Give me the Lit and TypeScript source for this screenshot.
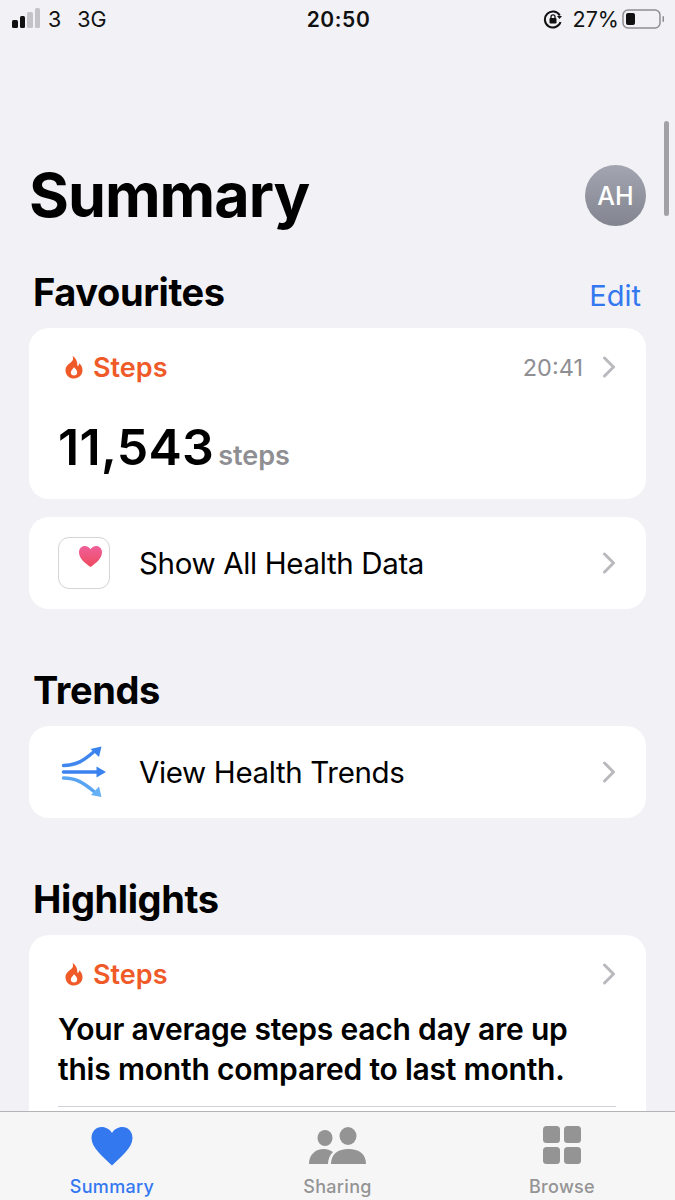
import { LitElement, html, css, svg } from "lit";
import { customElement } from "lit/decorators.js";

const flame = svg`<svg class="flame" viewBox="0 0 20 24" width="20" height="24"><path fill="#ef5a28" fill-rule="evenodd" d="M8.500 1c1.200 2.500.6 4.200-1.200 6C5 8.800 1.500 11.200 1.500 15.200 1.500 19.900 5.200 23.500 10 23.500s8.500-3.500 8.500-8.200c0-3.300-1.600-5.600-3.200-7-.2 1.500-.8 2.500-1.900 3C13.700 7 12 3 8.500 1zM10 12.300c1.800 1.900 3.200 3.300 3.200 5.200 0 1.900-1.400 3-3.200 3s-3.200-1.100-3.200-3c0-1.900 1.800-3 3.200-5.200z"/></svg>`;
const chevron = svg`<svg class="chev" viewBox="0 0 14 22" width="14" height="22"><path d="M2.500 2l9 9-9 9" fill="none" stroke="#b9b9be" stroke-width="3" stroke-linecap="round" stroke-linejoin="round"/></svg>`;

@customElement("app-root")
export class AppRoot extends LitElement {
  static styles = css`
    :host { display: block; position: relative; width: 675px; height: 1200px; overflow: hidden; background: #f1f1f6; font-family: Inter, "Liberation Sans", sans-serif; color: #000; }
    .status { height: 38px; display: grid; grid-template-columns: 1fr auto 1fr; align-items: center; padding: 0 10px 0 12px; font-size: 21.500px; color: #111; }
    .left { display: flex; align-items: center; gap: 8px; }
    .left .net { margin-left: 8px; }
    .bars { display: flex; align-items: flex-end; gap: 2px; height: 20px; margin-top: -2px; }
    .bars i { display: block; width: 5.500px; border-radius: 1.500px; background: #111; }
    .bars i.off { background: #c4c4c8; }
    .time { font-weight: 600; font-size: 21px; letter-spacing: .6px; }
    .right { display: flex; justify-content: flex-end; align-items: center; gap: 10px; }
    .right .pct { margin-right: -7px; }
    main { padding: 0 29px; }
    .head { display: flex; justify-content: space-between; align-items: center; margin-top: 127px; height: 61px; }
    h1 { margin: 0; font-size: 61px; font-weight: 700; letter-spacing: -1px; line-height: 61px; }
    .avatar { width: 61px; height: 61px; border-radius: 50%; background: linear-gradient(#a3a6b0, #82858f); color: #fff; font-size: 25px; font-weight: 500; display: flex; align-items: center; justify-content: center; }
    .section { display: flex; justify-content: space-between; align-items: center; padding: 0 4px; height: 42px; margin-bottom: 16px; }
    h2 { margin: 2px 0 0 0; font-size: 38px; font-weight: 700; letter-spacing: -.4px; }
    .edit { color: #3478f0; font-size: 29px; padding-right: 1px; margin-top: 8px; }
    .f { margin-top: 44px; }
    .t { margin-top: 59px; }
    .card { background: #fff; border-radius: 20px; }
    .steps-card { height: 171px; padding: 21px 30px; box-sizing: border-box; margin-bottom: 18px; }
    .row1 { display: flex; align-items: center; height: 36px; gap: 9px; color: #ef5a28; font-size: 27px; font-weight: 600; }
    .flame { margin-left: 5px; }
    .hl .flame { margin-left: 6px; }
    .row1 .when { margin-left: auto; color: #8e8e93; font-weight: 400; font-size: 23.500px; }
    .row1 .chev { margin-left: 10px; }
    .big { display: flex; align-items: baseline; gap: 4px; margin-top: 32px; margin-left: -1px; }
    .big b { font-size: 50px; font-weight: 600; letter-spacing: .3px; }
    .big span { font-size: 27px; font-weight: 600; color: #8e8e93; }
    .link { height: 92px; display: flex; align-items: center; padding: 0 30px 0 29px; font-size: 29.500px; letter-spacing: -.35px; }
    .link .chev { margin-left: auto; }
    .appicon { width: 52px; height: 52px; box-sizing: border-box; border: 1px solid #d4d4d8; border-radius: 11px; margin-right: 29px; display: flex; align-items: flex-start; padding: 7px 0 0 19px; }
    .ticon { margin: 0 30px 0 0; }
    .hl { padding: 21px 30px 0 29px; height: 260px; box-sizing: border-box; }
    .hl p { margin: 17px 0 17px; font-size: 30px; font-weight: 600; line-height: 40px; letter-spacing: -.2px; }
    .hl hr { border: 0; height: 1px; background: #d0d0d4; margin: 0; }
    .scroll { position: absolute; left: 664px; top: 121px; width: 5px; height: 95px; border-radius: 3px; background: #a2a2a6; }
    nav { position: absolute; left: 0; right: 0; bottom: 0; height: 88px; background: #f6f6f7; border-top: 1px solid #b4b4b8; display: grid; grid-template-columns: 224px 227px 222px; font-size: 18px; color: #949494; }
    nav div { display: flex; flex-direction: column; align-items: center; padding-top: 14px; gap: 10px; box-sizing: border-box; }
    nav svg { display: block; height: 40px; }
    nav span { letter-spacing: .3px; font-weight: 500; }
    nav .on { color: #3478f0; }
  `;

  render() {
    return html`
      <div class="status">
        <div class="left">
          <div class="bars"><i style="height:8px"></i><i style="height:12px"></i><i class="off" style="height:16px"></i><i class="off" style="height:20px"></i></div>
          <span>3</span><span class="net">3G</span>
        </div>
        <div class="time">20:50</div>
        <div class="right">
          <svg width="20" height="20" viewBox="0 0 20 20"><path d="M16.800 6.500A8 8 0 1 0 17.500 13" fill="none" stroke="#111" stroke-width="2"/><path d="M14 7h5l-2.500 3z" fill="#111"/><rect x="6.500" y="9" width="7" height="5.500" rx="1" fill="#111"/><path d="M8 9.500V7.800a2 2 0 0 1 4 0v1.700" fill="none" stroke="#111" stroke-width="1.300"/></svg>
          <span class="pct">27%</span>
          <svg width="43" height="20" viewBox="0 0 43 20"><rect x="1" y="1" width="37" height="18" rx="5" fill="none" stroke="#8e8e92" stroke-width="1.500"/><rect x="4" y="4" width="9" height="12" rx="2" fill="#111"/><rect x="40.500" y="7" width="1.500" height="6" rx=".7" fill="#8e8e92"/></svg>
        </div>
      </div>
      <main>
        <div class="head"><h1>Summary</h1><div class="avatar">AH</div></div>
        <div class="section f"><h2>Favourites</h2><span class="edit">Edit</span></div>
        <div class="card steps-card">
          <div class="row1">${flame}Steps<span class="when">20:41</span>${chevron}</div>
          <div class="big"><b>11,543</b><span>steps</span></div>
        </div>
        <div class="card link">
          <div class="appicon"><svg width="25" height="23" viewBox="0 0 26 24"><defs><linearGradient id="hg" x1="0" y1="0" x2="0" y2="1"><stop offset="0" stop-color="#f0609a"/><stop offset="1" stop-color="#ee4a5e"/></linearGradient></defs><path d="M13 23C7 18.500 1 14 1 7.500 1 3.500 4 1 7 1c2.600 0 4.800 1.400 6 3.500C14.200 2.400 16.400 1 19 1c3 0 6 2.500 6 6.500C25 14 19 18.500 13 23z" fill="url(#hg)"/></svg></div>
          Show All Health Data${chevron}
        </div>
        <div class="section t"><h2>Trends</h2></div>
        <div class="card link">
          <svg class="ticon" width="51" height="52" viewBox="-1 0 51 52" fill="none" stroke-width="3.500" stroke-linecap="round"><path d="M4.500 19.500C17 19.500 24 15 34 6.500" stroke="#3f87ee"/><path d="M42.500 .5L31.500 3l8.500 8z" fill="#3a83ee"/><path d="M4.500 26H39" stroke="#3a83ee"/><path d="M37.500 20.500L47 26l-9.500 5.500z" fill="#3a83ee"/><path d="M4.500 32C17 32 24 36.500 35 45.500" stroke="#5aa5f2"/><path d="M42.500 51L32 49l8-8.500z" fill="#66b1f5"/></svg>
          View Health Trends${chevron}
        </div>
        <div class="section t"><h2>Highlights</h2></div>
        <div class="card hl">
          <div class="row1">${flame}Steps<span class="when"></span>${chevron}</div>
          <p>Your average steps each day are up this month compared to last month.</p>
          <hr />
        </div>
      </main>
      <div class="scroll"></div>
      <nav>
        <div class="on"><svg width="44" height="40" viewBox="0 0 44 40"><path d="M22 39.500C14 31.500 1.500 22 1.500 12 1.500 5.500 6 1 11.500 1 16 1 20 3.500 22 7c2-3.500 6-6 10.500-6C38 1 42.500 5.500 42.500 12c0 10-12.500 19.500-20.500 27.500z" fill="#3478f0"/></svg><span>Summary</span></div>
        <div><svg width="58" height="40" viewBox="0 0 58 40" fill="#949494"><ellipse cx="16" cy="12" rx="7.500" ry="8"/><ellipse cx="39" cy="10" rx="8.500" ry="9"/><path d="M0 38C0 29 6 23 15 23c3 0 6 1 9 3-3 3-5 7-5 12z"/><path d="M22 38c0-10 7-15 17.500-15S57 28 57 38z"/></svg><span>Sharing</span></div>
        <div><svg width="38" height="40" viewBox="0 0 38 40" fill="#949494"><rect width="17" height="17" rx="3.500"/><rect x="21" width="17" height="17" rx="3.500"/><rect y="21" width="17" height="17" rx="3.500"/><rect x="21" y="21" width="17" height="17" rx="3.500"/></svg><span>Browse</span></div>
      </nav>
    `;
  }
}
